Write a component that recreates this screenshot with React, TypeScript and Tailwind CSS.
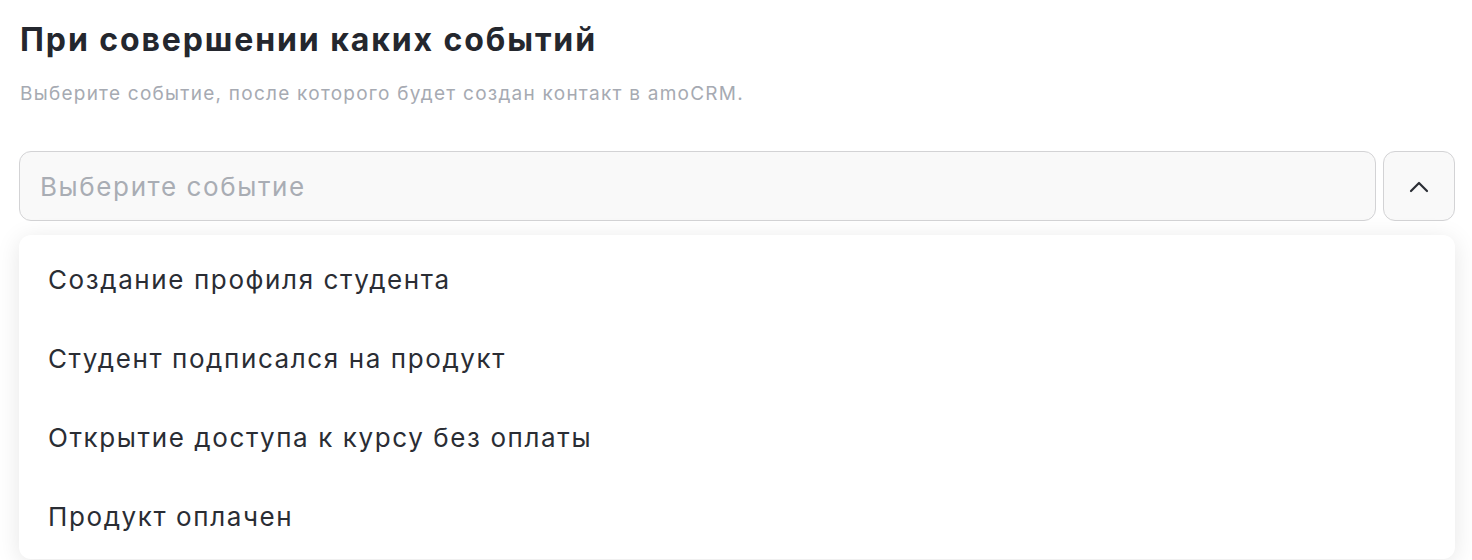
const events = [
  "Создание профиля студента",
  "Студент подписался на продукт",
  "Открытие доступа к курсу без оплаты",
  "Продукт оплачен",
];

const App = () => {
  return (
    <div className="min-h-[560px] bg-white overflow-hidden font-['Inter','Noto_Sans',sans-serif] px-[19px] pt-[18px]">
      {/* Header */}
      <h1 className="text-[32px] leading-[44px] font-bold tracking-[1.9px] text-[#24272e] pl-[1px]">При совершении каких событий</h1>
      <p className="mt-[20px] text-[19px] leading-[24px] tracking-[1.25px] text-[#a6aab2] pl-[1px]">
        Выберите событие, после которого будет создан контакт в amoCRM.
      </p>

      {/* Select */}
      <div className="relative mt-[45px] w-[1436px]">
        <div className="flex gap-[7px]">
          <div className="flex-1 h-[70px] flex items-center px-[20px] rounded-[12px] border border-[#d3d3d5] bg-[#f9f9f9]">
            <span className="text-[26px] tracking-[1.6px] text-[#a9adb4]">Выберите событие</span>
          </div>
          <button className="w-[72px] h-[70px] flex items-center justify-center rounded-[12px] border border-[#d3d3d5] bg-[#f9f9f9]">
            <svg width="20" height="13" viewBox="0 0 20 13" fill="none" stroke="#2a2d34" strokeWidth="2.2" strokeLinecap="round" strokeLinejoin="round">
              <polyline points="2,11 10,3 18,11" />
            </svg>
          </button>
        </div>

        {/* Dropdown */}
        <div className="absolute left-0 right-0 top-[84px] z-10 bg-white rounded-[12px] shadow-[0_4px_24px_rgba(0,0,0,0.1)] pt-[5px] pb-[3px]">
          {events.map((item) => (
            <div key={item} className="h-[79px] flex items-center px-[29px] text-[26px] tracking-[1.6px] text-[#2a2d34] cursor-pointer hover:bg-gray-50">
              {item}
            </div>
          ))}
        </div>
      </div>
    </div>
  );
};

export default App;
